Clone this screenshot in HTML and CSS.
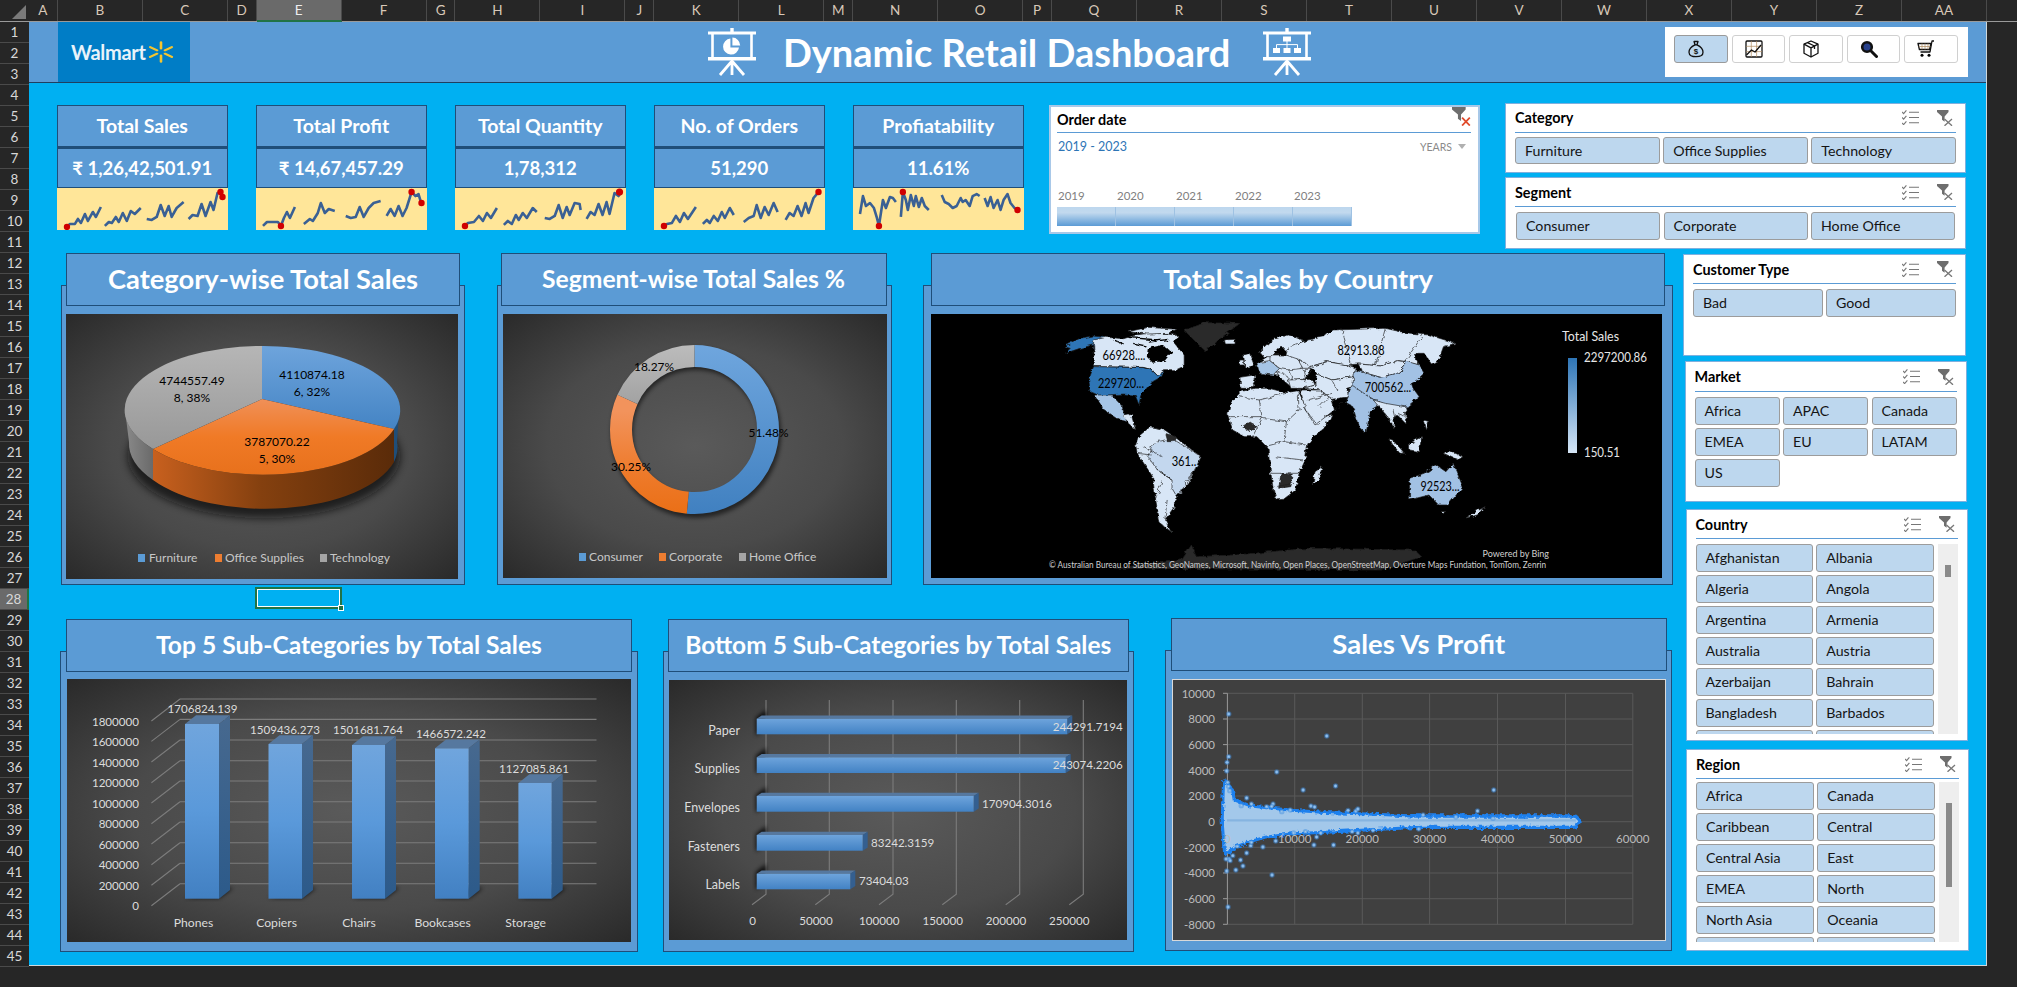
FILE: index.html
```html
<!DOCTYPE html>
<html lang="en">
<head>
<meta charset="utf-8">
<title>Dynamic Retail Dashboard</title>
<link rel="stylesheet" href="styles.css">
</head>
<body>
<svg class="defs" aria-hidden="true">
  <defs>
    <radialGradient id="bgDark" cx="50%" cy="50%" r="70%"><stop offset="0" stop-color="#5a5a5a"/><stop offset=".55" stop-color="#4a4a4a"/><stop offset="1" stop-color="#2a2a2a"/></radialGradient>
    <linearGradient id="pieBlue" x1="0" y1="0" x2="0" y2="1"><stop offset="0" stop-color="#6ea4dc"/><stop offset="1" stop-color="#4484c4"/></linearGradient>
    <linearGradient id="pieOrange" x1="0" y1="0" x2="0" y2="1"><stop offset="0" stop-color="#f09058"/><stop offset=".5" stop-color="#f07a26"/><stop offset="1" stop-color="#e8711c"/></linearGradient>
    <linearGradient id="pieGray" x1="0" y1="0" x2="0" y2="1"><stop offset="0" stop-color="#b6b6b6"/><stop offset="1" stop-color="#989898"/></linearGradient>
    <linearGradient id="wallOrange" x1="0" y1="0" x2="1" y2="0"><stop offset="0" stop-color="#c8601e"/><stop offset=".45" stop-color="#84400f"/><stop offset="1" stop-color="#5a2b09"/></linearGradient>
    <linearGradient id="wallGray" x1="0" y1="0" x2="1" y2="0"><stop offset="0" stop-color="#8a8a8a"/><stop offset="1" stop-color="#6a6a6a"/></linearGradient>
    <linearGradient id="barFront" x1="0" y1="0" x2="0" y2="1"><stop offset="0" stop-color="#70a5dd"/><stop offset=".5" stop-color="#5a99da"/><stop offset="1" stop-color="#4280c2"/></linearGradient>
    <linearGradient id="barSide" x1="0" y1="0" x2="0" y2="1"><stop offset="0" stop-color="#47698f"/><stop offset="1" stop-color="#2c5a8a"/></linearGradient>
    <linearGradient id="hbarFront" x1="0" y1="0" x2="0" y2="1"><stop offset="0" stop-color="#6ea4dc"/><stop offset="1" stop-color="#4282c4"/></linearGradient>
    <linearGradient id="legendBar" x1="0" y1="0" x2="0" y2="1"><stop offset="0" stop-color="#2e75b6"/><stop offset="1" stop-color="#d6e6f6"/></linearGradient>
    <linearGradient id="donutBlue" gradientUnits="userSpaceOnUse" x1="276" y1="0" x2="106" y2="0"><stop offset="0" stop-color="#6fa6de"/><stop offset="1" stop-color="#4080c0"/></linearGradient>
    <linearGradient id="donutOrange" gradientUnits="userSpaceOnUse" x1="210" y1="0" x2="106" y2="0"><stop offset="0" stop-color="#f2935c"/><stop offset=".6" stop-color="#ee7a2a"/><stop offset="1" stop-color="#ea6f16"/></linearGradient>
    <linearGradient id="donutGray" gradientUnits="userSpaceOnUse" x1="276" y1="0" x2="190" y2="0"><stop offset="0" stop-color="#bcbcbc"/><stop offset="1" stop-color="#969696"/></linearGradient>
    <filter id="soft" x="-20%" y="-20%" width="140%" height="140%"><feGaussianBlur stdDeviation="4"/></filter>
    <filter id="softS" x="-40%" y="-40%" width="180%" height="180%"><feGaussianBlur stdDeviation="2"/></filter>
    <filter id="rough" x="-5%" y="-20%" width="110%" height="140%"><feTurbulence type="fractalNoise" baseFrequency=".09" numOctaves="2" seed="4"/><feDisplacementMap in="SourceGraphic" scale="16"/></filter>
    <filter id="coast" x="-2%" y="-2%" width="104%" height="104%"><feTurbulence type="fractalNoise" baseFrequency=".07" numOctaves="3" seed="9"/><feDisplacementMap in="SourceGraphic" scale="12"/></filter>
    <symbol id="i-check" viewBox="0 0 17 15"><g class="ic-line"><path d="M0 2l1.6 1.6L4.4.4M0 7.5l1.6 1.6 2.8-3.2M0 13l1.6 1.6L4.4 11.4"/><path d="M7 2.2h10M7 7.5h10M7 12.8h10"/></g></symbol>
    <symbol id="i-clear" viewBox="0 0 16 16"><path class="ic-fill" d="M0 0h11.5v2L7.6 6.4v5.4L5 9.8V6.4L0 2z"/><path class="ic-x" d="M7.5 9l7.5 6.8M15 9l-7.5 6.8"/></symbol>
    <symbol id="i-clear-red" viewBox="0 0 16 16"><path class="ic-fill" d="M0 0h11.5v2L7.6 6.4v5.4L5 9.8V6.4L0 2z"/><path class="ic-xred" d="M8.5 9l6.5 6.6M15 9l-6.5 6.6"/></symbol>
    <symbol id="i-board" viewBox="0 0 48 48"><g class="bd-fill"><rect x="22.3" y="0" width="3.4" height="5"/><rect x="0" y="3.5" width="48" height="3"/><rect x="3.2" y="6" width="2.6" height="24"/><rect x="42.2" y="6" width="2.6" height="24"/><rect x="0" y="29" width="48" height="3.5"/></g><path class="bd-line" d="M24 32v15M24 33L12 47M24 33l12 14"/></symbol>
  </defs>
</svg>

<header class="colhead">
  <span class="corner"><svg class="corner-tri" viewBox="0 0 16 16"><path d="M16 0v16H0z"/></svg></span>
  <span class="c n">A</span><span class="c">B</span><span class="c">C</span><span class="c n">D</span><span class="c sel">E</span><span class="c">F</span><span class="c n">G</span><span class="c">H</span><span class="c">I</span><span class="c n">J</span><span class="c">K</span><span class="c">L</span><span class="c n">M</span><span class="c">N</span><span class="c">O</span><span class="c n">P</span><span class="c">Q</span><span class="c">R</span><span class="c">S</span><span class="c">T</span><span class="c">U</span><span class="c">V</span><span class="c">W</span><span class="c">X</span><span class="c">Y</span><span class="c">Z</span><span class="c">AA</span>
</header>

<div class="workspace">
  <nav class="rowhead">
    <span>1</span><span>2</span><span>3</span><span>4</span><span>5</span><span>6</span><span>7</span><span>8</span><span>9</span><span>10</span><span>11</span><span>12</span><span>13</span><span>14</span><span>15</span><span>16</span><span>17</span><span>18</span><span>19</span><span>20</span><span>21</span><span>22</span><span>23</span><span>24</span><span>25</span><span>26</span><span>27</span><span class="sel">28</span><span>29</span><span>30</span><span>31</span><span>32</span><span>33</span><span>34</span><span>35</span><span>36</span><span>37</span><span>38</span><span>39</span><span>40</span><span>41</span><span>42</span><span>43</span><span>44</span><span>45</span>
  </nav>

  <main class="sheet">
    <div class="banner">
      <div class="logo">
        <span class="logo-word">Walmart</span>
        <svg class="logo-spark" viewBox="0 0 28 28" preserveAspectRatio="none"><g class="spark"><path d="M14 1.5v8M14 18.5v8M3.2 7.8l6.9 4M17.9 16.2l6.9 4M3.2 20.2l6.9-4M17.9 11.8l6.9-4"/></g></svg>
      </div>
      <svg class="board-icon first" viewBox="0 0 48 48"><use href="#i-board"/><path class="bd-pie" d="M22.4 10.6a8 8 0 1 0 8.6 9H22.4z"/><path class="bd-pie" d="M24.4 9.6v7.8h7.8a8 8 0 0 0-7.8-7.8z"/></svg>
      <h1 class="title">Dynamic Retail Dashboard</h1>
      <svg class="board-icon second" viewBox="0 0 48 48"><use href="#i-board"/><g class="bd-fill"><rect x="20" y="8.500" width="8" height="5"/><rect x="10" y="20" width="7" height="5"/><rect x="20.500" y="20" width="7" height="5"/><rect x="31" y="20" width="7" height="5"/></g><path class="bd-thin" d="M24 13v7M13.500 20v-3.400h21V20"/></svg>
      <div class="toolbar">
        <button class="tool on"><svg viewBox="0 0 18 18"><g class="t-line"><path d="M7 1.500h4L10 4.800c3 1.400 6 4.400 6 7.400 0 3-3 4.500-7 4.500s-7-1.500-7-4.500c0-3 3-6 6-7.400z"/><path d="M7.500 4.800h3"/></g><text x="9" y="13.500" class="t-dollar">$</text></svg></button>
        <button class="tool"><svg viewBox="0 0 18 18"><g class="t-line"><rect x="1" y="1" width="16" height="16" rx="1"/><path class="t-grid" d="M1 6.300h16M1 11.600h16M6.300 1v16M11.600 1v16"/><path d="M1.500 15l5-5 3.500 2 6-7"/></g></svg></button>
        <button class="tool"><svg viewBox="0 0 18 18"><g class="t-line"><path d="M9 1l7 3.200v9L9 17l-7-3.800v-9z"/><path d="M2 4.200l7 3.600 7-3.600M9 7.800V17M5.500 2.600l7 3.400v3"/></g></svg></button>
        <button class="tool"><svg viewBox="0 0 18 18"><circle class="t-thick" cx="7" cy="7" r="4.800"/><path class="t-handle" d="M10.800 10.800l5.700 5.700"/></svg></button>
        <button class="tool"><svg viewBox="0 0 18 18"><g class="t-line"><path d="M17 1h-2l-2 11H3.500"/><path d="M1 3.500h13l-1.400 6H2.400z"/><path class="t-grid" d="M5 3.500v6M8 3.500v6M11 3.500v6M1.700 6.500h11.700"/></g><circle cx="5" cy="15.200" r="1.500"/><circle cx="12" cy="15.200" r="1.500"/></svg></button>
      </div>
    </div>

    <section class="top-row">
      <div class="kpis">
        <article class="kpi">
          <h3 class="kpi-cell">Total Sales</h3>
          <p class="kpi-cell">₹ 1,26,42,501.91</p>
          <svg class="spark-chart" viewBox="0 0 171 42">
            <polyline points="10,39 13,36 18,36 21,31 24,35 28,26 31,33 36,24 39,29 44,19"/><polyline points="48,38 52,34 55,35 59,29 62,34 66,25 70,33 74,23 78,26 84,20"/><polyline points="90,31 95,32 100,29 104,17 108,28 112,18 115,29 120,20 127,14"/><polyline points="132,31 136,27 141,28 145,16 149,28 154,14 157,22 161,5 164,4 166,10"/>
            <circle cx="10" cy="39" r="3.200"/><circle cx="164" cy="4" r="3.200"/><circle cx="166" cy="9" r="3.200"/>
          </svg>
        </article>
        <article class="kpi">
          <h3 class="kpi-cell">Total Profit</h3>
          <p class="kpi-cell">₹ 14,67,457.29</p>
          <svg class="spark-chart" viewBox="0 0 171 42">
            <polyline points="7,38 11,34 18,34 22,34 25,38 28,30 31,24 34,30 39,19"/><polyline points="48,36 54,31 57,33 62,25 65,15 69,25 73,21 79,23"/><polyline points="90,28 95,30 100,29 104,19 108,29 113,20 118,15 125,13"/><polyline points="131,28 135,21 139,28 143,18 147,28 151,20 156,4 160,8 163,6 166,16"/>
            <circle cx="25" cy="38" r="3.200"/><circle cx="156" cy="4" r="3.200"/><circle cx="166" cy="15" r="3.200"/>
          </svg>
        </article>
        <article class="kpi">
          <h3 class="kpi-cell">Total Quantity</h3>
          <p class="kpi-cell">1,78,312</p>
          <svg class="spark-chart" viewBox="0 0 171 42">
            <polyline points="10,38 13,35 19,34 24,28 28,33 32,25 36,30 42,20"/><polyline points="49,37 53,33 57,36 61,27 64,32 68,25 72,30 78,20 82,24"/><polyline points="90,30 95,31 100,28 104,17 108,30 112,19 115,27 120,15 125,16 126,22"/><polyline points="132,31 136,24 140,27 144,16 148,27 152,14 155,26 160,5 164,8 166,5"/>
            <circle cx="10" cy="38" r="3.200"/><circle cx="165" cy="4" r="3.600"/>
          </svg>
        </article>
        <article class="kpi">
          <h3 class="kpi-cell">No. of Orders</h3>
          <p class="kpi-cell">51,290</p>
          <svg class="spark-chart" viewBox="0 0 171 42">
            <polyline points="10,38 13,36 18,35 22,28 26,34 30,25 34,31 42,19"/><polyline points="49,36 53,32 56,35 60,28 64,33 68,24 71,30 76,20 80,27"/><polyline points="90,34 95,30 100,28 103,17 107,30 111,19 115,27 120,15 124,24"/><polyline points="132,32 136,25 140,28 144,18 148,28 152,15 155,25 160,10 165,4"/>
            <circle cx="10" cy="38" r="3.200"/><circle cx="165" cy="4" r="3.200"/>
          </svg>
        </article>
        <article class="kpi">
          <h3 class="kpi-cell">Profiatability</h3>
          <p class="kpi-cell">11.61%</p>
          <svg class="spark-chart" viewBox="0 0 171 42">
            <polyline points="7,26 10,8 13,18 17,15 21,20 24,30 26,38 30,12 33,20 37,9 40,10 43,14"/><polyline points="48,29 50,4 53,12 55,22 58,7 61,18 63,8 66,19 69,10 72,18 76,22"/><polyline points="89,7 92,14 96,16 100,20 104,18 108,10 110,14 113,12 117,18 120,8 124,6 127,8"/><polyline points="132,10 135,18 138,9 141,20 145,12 148,22 151,12 155,6 158,15 162,20 165,22"/>
            <circle cx="26" cy="38" r="3.200"/><circle cx="50" cy="4" r="3.200"/><circle cx="165" cy="22" r="3.200"/>
          </svg>
        </article>
      </div>

      <section class="timeline">
        <div class="tl-head"><h4 class="sl-title">Order date</h4><svg class="ic-red"><use href="#i-clear-red"/></svg></div>
        <div class="tl-range"><span class="tl-dates">2019 - 2023</span><span class="tl-level">YEARS<i class="tl-caret"></i></span></div>
        <div class="tl-years"><span>2019</span><span>2020</span><span>2021</span><span>2022</span><span>2023</span></div>
        <div class="tl-bars"><i></i><i></i><i></i><i></i><i></i></div>
      </section>

      <div class="stack">
        <section class="slicer s-cat">
          <div class="sl-head"><h4 class="sl-title">Category</h4><svg class="ic-check"><use href="#i-check"/></svg><svg class="ic-clear"><use href="#i-clear"/></svg></div>
          <div class="sl-grid g3"><span class="btn">Furniture</span><span class="btn">Office Supplies</span><span class="btn">Technology</span></div>
        </section>
        <section class="slicer s-seg">
          <div class="sl-head"><h4 class="sl-title">Segment</h4><svg class="ic-check"><use href="#i-check"/></svg><svg class="ic-clear"><use href="#i-clear"/></svg></div>
          <div class="sl-grid g3"><span class="btn">Consumer</span><span class="btn">Corporate</span><span class="btn">Home Office</span></div>
        </section>
      </div>
    </section>

    <section class="lower">
      <div class="charts">
        <div class="chart-row r1">
          <article class="card c-cat">
            <h2 class="card-title">Category-wise Total Sales</h2>
            <div class="panel">
              <svg class="plot" viewBox="0 0 392 265">
                <rect width="392" height="265" fill="url(#bgDark)"/>
                <ellipse cx="198" cy="142" rx="136" ry="62" fill="#111" opacity=".75" filter="url(#soft)"/>
                <path d="M59 96A137 64 0 0 0 87 135V166A134 64 0 0 1 63 128Z" fill="url(#wallGray)"/>
                <path d="M87 135A137 64 0 0 0 328 115V148A134 64 0 0 1 87 166Z" fill="url(#wallOrange)"/>
                <path d="M333 96A137 64 0 0 1 328 115V148A134 64 0 0 0 331 128Z" fill="#1f4e79"/>
                <path d="M196 85L196 32A137 64 0 0 1 328 115Z" fill="url(#pieBlue)"/>
                <path d="M196 85L328 115A137 64 0 0 1 87 135Z" fill="url(#pieOrange)"/>
                <path d="M196 85L87 135A137 64 0 0 1 196 32Z" fill="url(#pieGray)"/>
                <g class="dl-black">
                  <text x="246" y="65">4110874.18</text><text x="246" y="82">6, 32%</text>
                  <text x="211" y="132">3787070.22</text><text x="211" y="149">5, 30%</text>
                  <text x="126" y="71">4744557.49</text><text x="126" y="88">8, 38%</text>
                </g>
                <g class="legend">
                  <rect x="72" y="240" width="7" height="8" fill="#5b9bd5"/><text x="83" y="248">Furniture</text>
                  <rect x="149" y="240" width="7" height="8" fill="#ed7d31"/><text x="159" y="248">Office Supplies</text>
                  <rect x="254" y="240" width="7" height="8" fill="#a5a5a5"/><text x="264" y="248">Technology</text>
                </g>
              </svg>
            </div>
          </article>
          <article class="card c-seg">
            <h2 class="card-title">Segment-wise Total Sales %</h2>
            <div class="panel">
              <svg class="plot" viewBox="0 0 384 264">
                <rect width="384" height="264" fill="url(#bgDark)"/>
                <circle cx="193" cy="119" r="74" class="donut-shadow" filter="url(#softS)"/>
                <g transform="rotate(-90 191.500 115.500)" class="donut">
                  <circle cx="191.500" cy="115.500" r="73.500" pathLength="100" stroke="url(#donutBlue)" stroke-dasharray="51.48 100"/>
                  <circle cx="191.500" cy="115.500" r="73.500" pathLength="100" stroke="url(#donutOrange)" stroke-dasharray="30.25 100" stroke-dashoffset="-51.48"/>
                  <circle cx="191.500" cy="115.500" r="73.500" pathLength="100" stroke="url(#donutGray)" stroke-dasharray="18.27 100" stroke-dashoffset="-81.73"/>
                </g>
                <g class="dl-black">
                  <text x="265.500" y="123" textLength="40" lengthAdjust="spacingAndGlyphs">51.48%</text><text x="128" y="157" textLength="40" lengthAdjust="spacingAndGlyphs">30.25%</text><text x="151" y="57" textLength="40" lengthAdjust="spacingAndGlyphs">18.27%</text>
                </g>
                <g class="legend">
                  <rect x="76" y="239" width="7" height="8" fill="#5b9bd5"/><text x="86" y="247">Consumer</text>
                  <rect x="156" y="239" width="7" height="8" fill="#ed7d31"/><text x="166" y="247">Corporate</text>
                  <rect x="236" y="239" width="7" height="8" fill="#a5a5a5"/><text x="246" y="247">Home Office</text>
                </g>
              </svg>
            </div>
          </article>
          <article class="card c-map">
            <h2 class="card-title">Total Sales by Country</h2>
            <div class="panel">
              <svg class="plot" viewBox="0 0 731 264">
                <rect width="731" height="264" fill="#000"/>
                <g transform="translate(-11 -74) scale(.4847 .3333)" class="map" filter="url(#coast)">
                  <polygon class="mx" points="545,270 590,248 660,250 620,295 590,335 565,300"/>
                  <polygon class="mx" points="400,985 540,960 560,915 570,950 650,945 800,925 1020,930 1035,950 950,990"/>
                  <polygon class="mu" points="297,320 330,295 355,288 385,292 358,330 358,315 330,325 300,340 310,325"/>
                  <polygon class="ml" points="358,300 385,292 420,296 445,285 480,278 530,285 525,310 545,345 545,378 525,392 505,392 490,407 478,388 460,382 360,380"/>
                  <polygon class="ml" points="430,275 470,262 530,268 512,280 470,282"/>
                  <polygon class="mk" points="470,325 500,315 520,335 505,362 480,368 468,350"/>
                  <path class="mk-line" d="M430 292l60 8M472 306l40-8M440 310l25 8M400 300l20 12"/>
                  <polygon class="mu" points="358,380 460,383 478,390 490,407 505,393 498,410 480,425 470,440 455,468 452,495 444,466 420,462 395,464 375,470 352,455 348,420"/>
                  <polygon class="mm" points="360,465 395,465 415,495 420,525 435,545 405,535 380,510"/>
                  <polygon class="ml" points="420,525 435,520 445,570 430,550"/>
                  <polygon class="ml" points="450,590 475,560 505,570 525,590 580,650 570,680 555,730 525,780 525,800 505,840 518,875 495,850 485,770 480,710 448,640 445,615"/>
                  <polygon class="mb" points="480,610 505,600 525,600 580,650 570,680 555,720 530,770 520,745 520,720 490,690 470,650"/>
                  <polygon class="mx" points="505,580 530,590 525,605 510,605"/>
                  <polygon class="ml" points="635,525 640,490 662,455 690,445 720,445 755,458 780,452 800,510 815,542 850,522 838,560 812,590 800,612 795,660 782,700 775,750 750,778 735,780 728,740 722,680 718,625 695,590 670,590 645,570"/>
                  <polygon class="ml" points="830,680 822,720 810,735 815,695"/>
                  <polygon class="mx" points="745,700 770,705 765,740 740,745"/>
                  <polygon class="mx" points="665,560 680,545 695,560 680,575"/>
                  <polygon class="ml" points="700,365 722,345 770,345 820,365 810,385 795,415 770,425 740,405 700,400"/>
                  <polygon class="ml" points="660,412 690,405 692,420 682,445 662,445"/>
                  <polygon class="mm" points="695,368 722,362 742,385 728,405 700,400"/>
                  <polygon class="ml" points="722,345 770,345 790,375 780,395 742,385 722,362"/>
                  <polygon class="ml" points="735,395 750,400 775,435 765,440 745,415"/>
                  <polygon class="ml" points="760,390 790,385 795,415 770,425 765,405"/>
                  <polygon class="ml" points="668,345 680,340 690,378 670,382"/>
                  <polygon class="ml" points="660,360 668,360 668,375 658,375"/>
                  <polygon class="ml" points="700,335 725,300 760,285 790,300 770,320 758,340 745,318 725,350 708,350"/>
                  <polygon class="ml" points="780,360 820,365 810,385 790,385"/>
                  <polygon class="ml" points="628,300 650,298 650,312 630,312"/>
                  <polygon class="ml" points="755,345 760,320 800,300 835,290 850,270 900,268 960,265 1000,278 1050,285 1105,310 1080,320 1070,360 1055,372 1040,340 1018,340 1030,375 1000,365 985,362 950,378 905,372 880,375 840,365 805,380 785,360"/>
                  <polygon class="ml" points="805,380 840,365 880,375 900,385 895,410 850,420 815,400"/>
                  <polygon class="ml" points="905,372 950,378 985,362 1000,365 1000,380 985,400 950,412 915,398"/>
                  <polygon class="mc" points="895,390 910,395 950,412 985,400 1000,380 1000,362 1030,375 1040,400 1025,420 1015,430 1020,450 1030,470 1005,500 975,505 955,490 935,478 890,440"/>
                  <polygon class="ml" points="815,400 850,420 895,410 893,440 880,445 885,470 850,478 825,450 790,445 815,435"/>
                  <polygon class="mc" points="885,445 895,440 935,478 945,480 950,492 930,510 920,580 905,560 893,500 880,490"/>
                  <polygon class="ml" points="785,450 825,450 850,478 855,510 815,555 795,510"/>
                  <polygon class="ml" points="760,420 810,418 815,435 790,445 765,445"/>
                  <ellipse class="mk" cx="812" cy="405" rx="7" ry="16"/>
                  <polygon class="ml" points="935,480 960,490 1000,500 1005,555 985,525 975,535 980,570 965,530"/>
                  <polygon class="ml" points="965,595 975,600 1000,640 990,640"/>
                  <polygon class="ml" points="1010,610 1035,590 1030,635 1010,630"/>
                  <polygon class="ml" points="1090,630 1120,650 1110,660 1080,640"/>
                  <polygon class="ml" points="1040,540 1050,545 1045,570"/>
                  <polygon class="mc" points="1010,715 1040,700 1065,675 1085,695 1100,670 1120,740 1090,795 1070,795 1050,765 1010,780"/>
                  <polygon class="ml" points="1125,835 1165,800 1168,795 1150,825"/>
                  <polygon class="ml" points="1075,815 1085,815 1078,822"/>
                  <path class="mline" d="M660 470l40 10 55-20M700 480l6 55 50 10 30-40M640 530h66M706 535l-20 55M756 545l-5 60-40 15M751 605l45 10M730 650l60 10M725 700h55M735 740l35-10M780 450l2 60M810 380l-15 50M850 420l10 30M885 470l-30 40M820 555l-30-55M870 265l20 110M960 265l-20 110M1040 280l-40 85M460 620l40 30M490 690l30 30M500 720l-15 60M448 640l30 5M505 840l5-60M845 470l-20 30M800 480l50 -20M975 505l5 30M985 520l18 10"/>
                </g>
                <g class="dl-map">
                  <text x="193" y="46" textLength="43" lengthAdjust="spacingAndGlyphs">66928....</text><text x="430" y="41" textLength="47" lengthAdjust="spacingAndGlyphs">82913.88</text><text x="190" y="74" textLength="46" lengthAdjust="spacingAndGlyphs">229720...</text><text x="457" y="78" textLength="46.500" lengthAdjust="spacingAndGlyphs">700562...</text><text x="253" y="152" textLength="24.700" lengthAdjust="spacingAndGlyphs">361..</text><text x="509" y="177" textLength="39" lengthAdjust="spacingAndGlyphs">92523...</text>
                </g>
                <g class="map-legend">
                  <text x="631" y="27" textLength="57" lengthAdjust="spacingAndGlyphs">Total Sales</text>
                  <rect x="637" y="44" width="9" height="95" fill="url(#legendBar)"/>
                  <text x="653" y="48" textLength="63" lengthAdjust="spacingAndGlyphs">2297200.86</text><text x="653" y="143" textLength="36" lengthAdjust="spacingAndGlyphs">150.51</text>
                </g>
                <text class="attr attr-r" x="618" y="243">Powered by Bing</text>
                <text class="attr" x="118" y="254" textLength="497" lengthAdjust="spacingAndGlyphs">© Australian Bureau of Statistics, GeoNames, Microsoft, Navinfo, Open Places, OpenStreetMap, Overture Maps Fundation, TomTom, Zenrin</text>
              </svg>
            </div>
          </article>
        </div>
        <div class="chart-row r2">
          <article class="card c-top">
            <h2 class="card-title">Top 5 Sub-Categories by Total Sales</h2>
            <div class="panel">
              <svg class="plot" viewBox="0 0 564 263">
                <rect width="564" height="263" fill="url(#bgDark)"/>
                <path class="grid3d" d="M113 20H529.500M113 40.400H529.500M113 61H529.500M113 81.700H529.500M113 102H529.500M113 122.700H529.500M113 143H529.500M113 163.700H529.500M113 184.300H529.500M113 204.700H529.500M113 20L84.400 42M113 40.400L84.400 62.400M113 61L84.400 83M113 81.700L84.400 103.700M113 102L84.400 124M113 122.700L84.400 144.700M113 143L84.400 165M113 163.700L84.400 185.700M113 184.300L84.400 206.300M113 204.700L84.400 226.700"/>
                <g class="axis-r nums">
                  <text x="72" y="47">1800000</text><text x="72" y="67">1600000</text><text x="72" y="88">1400000</text><text x="72" y="108">1200000</text><text x="72" y="129">1000000</text><text x="72" y="149">800000</text><text x="72" y="170">600000</text><text x="72" y="190">400000</text><text x="72" y="211">200000</text><text x="72" y="231">0</text>
                </g>
                <g fill="#000" filter="url(#softS)" opacity=".8">
                  <polygon points="118,219 152,219 166,209 152,209"/><polygon points="201,219 235,219 249,209 235,209"/><polygon points="285,219 318,219 332,209 318,209"/><polygon points="368,219 402,219 416,209 402,209"/><polygon points="451,219 485,219 499,209 485,209"/>
                </g>
                <g>
                  <polygon class="b-top" points="118,45 152,45 163,36.300 129,36.300"/><polygon points="152,45 163,36.300 163,211 152,219.700" fill="url(#barSide)"/><rect x="118" y="45" width="34" height="174.700" fill="url(#barFront)"/>
                  <polygon class="b-top" points="201.500,65 235,65 246,56.300 212.500,56.300"/><polygon points="235,65 246,56.300 246,211 235,219.700" fill="url(#barSide)"/><rect x="201.500" y="65" width="33.500" height="154.700" fill="url(#barFront)"/>
                  <polygon class="b-top" points="285,66 318,66 329,57.300 296,57.300"/><polygon points="318,66 329,57.300 329,211 318,219.700" fill="url(#barSide)"/><rect x="285" y="66" width="33" height="153.700" fill="url(#barFront)"/>
                  <polygon class="b-top" points="368,69.300 401.700,69.300 412.700,60.600 379,60.600"/><polygon points="401.700,69.300 412.700,60.600 412.700,211 401.700,219.700" fill="url(#barSide)"/><rect x="368" y="69.300" width="33.700" height="150.400" fill="url(#barFront)"/>
                  <polygon class="b-top" points="451.400,104 484.700,104 495.700,95.300 462.400,95.300"/><polygon points="484.700,104 495.700,95.300 495.700,211 484.700,219.700" fill="url(#barSide)"/><rect x="451.400" y="104" width="33.300" height="115.700" fill="url(#barFront)"/>
                </g>
                <g class="axis-c nums">
                  <text x="135.500" y="34">1706824.139</text><text x="218" y="55">1509436.273</text><text x="301" y="55">1501681.764</text><text x="384" y="59">1466572.242</text><text x="467" y="94">1127085.861</text>
                </g>
                <g class="axis-c cats">
                  <text x="126.500" y="248">Phones</text><text x="209.600" y="248">Copiers</text><text x="292" y="248">Chairs</text><text x="375.600" y="248">Bookcases</text><text x="458.700" y="248">Storage</text>
                </g>
              </svg>
            </div>
          </article>
          <article class="card c-bot">
            <h2 class="card-title">Bottom 5 Sub-Categories by Total Sales</h2>
            <div class="panel">
              <svg class="plot" viewBox="0 0 458 260">
                <rect width="458" height="260" fill="url(#bgDark)"/>
                <path class="grid3d" d="M97 20V214.300L83 224.700M160.300 20V214.300L146.300 224.700M224 20V214.300L210 224.700M287.300 20V214.300L273.300 224.700M350.700 20V214.300L336.700 224.700M414.300 20V214.300L400.300 224.700"/>
                <g fill="#000" filter="url(#softS)" opacity=".85">
                  <polygon points="87,38 97,30 97,46 87,56"/><polygon points="87,76 97,68 97,84 87,94"/><polygon points="87,115 97,107 97,123 87,133"/><polygon points="87,154 97,146 97,162 87,172"/><polygon points="87,192 97,184 97,200 87,210"/>
                </g>
                <g>
                  <polygon class="b-top" points="87.700,38.700 398.300,38.700 403.300,35.400 92.700,35.400"/><polygon class="b-side" points="398.300,38.700 403.300,35.400 403.300,51 398.300,54.300"/><rect x="87.700" y="38.700" width="310.600" height="15.600" fill="url(#hbarFront)"/>
                  <polygon class="b-top" points="87.700,77.300 396.700,77.300 401.700,74 92.700,74"/><polygon class="b-side" points="396.700,77.300 401.700,74 401.700,89.700 396.700,93"/><rect x="87.700" y="77.300" width="309" height="15.700" fill="url(#hbarFront)"/>
                  <polygon class="b-top" points="87.700,116 304.700,116 309.700,112.700 92.700,112.700"/><polygon class="b-side" points="304.700,116 309.700,112.700 309.700,128.400 304.700,131.700"/><rect x="87.700" y="116" width="217" height="15.700" fill="url(#hbarFront)"/>
                  <polygon class="b-top" points="87.700,155 193.700,155 198.700,151.700 92.700,151.700"/><polygon class="b-side" points="193.700,155 198.700,151.700 198.700,167.400 193.700,170.700"/><rect x="87.700" y="155" width="106" height="15.700" fill="url(#hbarFront)"/>
                  <polygon class="b-top" points="87.700,193.700 181.300,193.700 186.300,190.400 92.700,190.400"/><polygon class="b-side" points="181.300,193.700 186.300,190.400 186.300,206 181.300,209.300"/><rect x="87.700" y="193.700" width="93.600" height="15.600" fill="url(#hbarFront)"/>
                </g>
                <g class="axis-l nums">
                  <text x="383.700" y="51">244291.7194</text><text x="383.700" y="89">243074.2206</text><text x="313" y="128">170904.3016</text><text x="202" y="167">83242.3159</text><text x="190" y="205">73404.03</text>
                </g>
                <g class="axis-r">
                  <text x="71" y="55">Paper</text><text x="71" y="93">Supplies</text><text x="71" y="132">Envelopes</text><text x="71" y="171">Fasteners</text><text x="71" y="209">Labels</text>
                </g>
                <g class="axis-c nums">
                  <text x="83.700" y="245">0</text><text x="147" y="245">50000</text><text x="210.300" y="245">100000</text><text x="273.700" y="245">150000</text><text x="337" y="245">200000</text><text x="400.300" y="245">250000</text>
                </g>
              </svg>
            </div>
          </article>
          <article class="card c-sca">
            <h2 class="card-title">Sales Vs Profit</h2>
            <div class="panel">
              <svg class="plot" viewBox="0 0 494 262">
                <rect x=".5" y=".5" width="493" height="261" class="sc-bg"/>
                <path class="sc-grid" d="M55.400 14.300H460.800M55.400 40H460.800M55.400 65.600H460.800M55.400 91.300H460.800M55.400 117H460.800M55.400 142.700H460.800M55.400 168.300H460.800M55.400 194H460.800M55.400 219.700H460.800M55.400 245.300H460.800M122.700 14.300V245.300M190.300 14.300V245.300M257.600 14.300V245.300M325.500 14.300V245.300M393.500 14.300V245.300M460.800 14.300V245.300"/>
                <path class="sc-axis" d="M55.400 14.300V245.300M51 14.300h4.400M51 40h4.400M51 65.600h4.400M51 91.300h4.400M51 117h4.400M51 142.700h4.400M51 168.300h4.400M51 194h4.400M51 219.700h4.400M51 245.300h4.400"/>
                <g class="sc-axt">
                  <text class="sc-r" x="43" y="18.500">10000</text><text class="sc-r" x="43" y="44">8000</text><text class="sc-r" x="43" y="69.500">6000</text><text class="sc-r" x="43" y="95.500">4000</text><text class="sc-r" x="43" y="121">2000</text><text class="sc-r" x="43" y="147">0</text><text class="sc-r" x="43" y="172.500">-2000</text><text class="sc-r" x="43" y="198">-4000</text><text class="sc-r" x="43" y="223.500">-6000</text><text class="sc-r" x="43" y="249.500">-8000</text>
                </g>
                <g transform="translate(-22 -70) scale(.338 .3333)">
                  <g filter="url(#rough)">
                    <path class="sc-tail-halo" d="M300 638H1252"/>
                    <polygon class="sc-halo" points="222,520 240,545 245,575 290,595 340,600 420,608 520,615 700,622 800,628 800,650 650,658 520,665 420,670 340,680 290,695 250,710 225,730 218,640"/>
                    <path class="sc-tail-core" d="M300 638H1252"/>
                    <polygon class="sc-core" points="222,520 240,545 245,575 290,595 340,600 420,608 520,615 700,622 800,628 800,650 650,658 520,665 420,670 340,680 290,695 250,710 225,730 218,640"/>
                  </g>
                  <path class="sc-mid" d="M228 634H1260"/>
                  <g class="sc-pts">
                    <circle cx="233" cy="315" r="5"/><circle cx="523" cy="381" r="5"/><circle cx="233" cy="443" r="5"/><circle cx="228" cy="460" r="5"/><circle cx="227" cy="486" r="5"/><circle cx="375" cy="489" r="5"/><circle cx="453" cy="543" r="5"/><circle cx="549" cy="531" r="5"/><circle cx="286" cy="567" r="5"/><circle cx="1017" cy="543" r="5"/><circle cx="969" cy="606" r="5"/><circle cx="476" cy="591" r="5"/><circle cx="487" cy="594" r="5"/><circle cx="586" cy="604" r="5"/><circle cx="609" cy="606" r="5"/><circle cx="615" cy="600" r="5"/><circle cx="364" cy="585" r="5"/><circle cx="345" cy="593" r="5"/><circle cx="360" cy="592" r="5"/><circle cx="485" cy="708" r="5"/><circle cx="493" cy="684" r="5"/><circle cx="543" cy="708" r="5"/><circle cx="286" cy="732" r="5"/><circle cx="334" cy="714" r="5"/><circle cx="372" cy="696" r="5"/><circle cx="268" cy="753" r="5"/><circle cx="275" cy="771" r="5"/><circle cx="254" cy="783" r="5"/><circle cx="227" cy="786" r="5"/><circle cx="361" cy="798" r="5"/><circle cx="231" cy="894" r="5"/><circle cx="234" cy="750" r="5"/><circle cx="237" cy="755" r="5"/><circle cx="245" cy="740" r="5"/><circle cx="225" cy="750" r="5"/><circle cx="298" cy="710" r="5"/><circle cx="258" cy="712" r="5"/><circle cx="300" cy="700" r="5"/><circle cx="1240" cy="690" r="5"/><circle cx="808" cy="618" r="5"/><circle cx="905" cy="624" r="5"/><circle cx="1015" cy="628" r="5"/><circle cx="660" cy="664" r="5"/><circle cx="795" cy="660" r="5"/><circle cx="615" cy="672" r="5"/><circle cx="598" cy="668" r="5"/><circle cx="505" cy="672" r="5"/><circle cx="460" cy="668" r="5"/><circle cx="425" cy="672" r="5"/><circle cx="415" cy="603" r="5"/><circle cx="390" cy="608" r="5"/><circle cx="300" cy="585" r="5"/><circle cx="270" cy="590" r="5"/><circle cx="230" cy="520" r="5"/><circle cx="232" cy="532" r="5"/><circle cx="236" cy="545" r="5"/>
                  </g>
                </g>
                <g class="sc-axt sc-c">
                  <text x="55.400" y="164">0</text><text x="122.700" y="164">10000</text><text x="190.300" y="164">20000</text><text x="257.600" y="164">30000</text><text x="325.500" y="164">40000</text><text x="393.500" y="164">50000</text><text x="460.800" y="164">60000</text>
                </g>
              </svg>
            </div>
          </article>
        </div>
      </div>

      <aside class="side">
        <section class="slicer s-cus">
          <div class="sl-head"><h4 class="sl-title">Customer Type</h4><svg class="ic-check"><use href="#i-check"/></svg><svg class="ic-clear"><use href="#i-clear"/></svg></div>
          <div class="sl-grid g2"><span class="btn">Bad</span><span class="btn">Good</span></div>
        </section>
        <section class="slicer s-mkt">
          <div class="sl-head"><h4 class="sl-title">Market</h4><svg class="ic-check"><use href="#i-check"/></svg><svg class="ic-clear"><use href="#i-clear"/></svg></div>
          <div class="sl-grid g3"><span class="btn">Africa</span><span class="btn">APAC</span><span class="btn">Canada</span><span class="btn">EMEA</span><span class="btn">EU</span><span class="btn">LATAM</span><span class="btn">US</span></div>
        </section>
        <section class="slicer s-cty">
          <div class="sl-head"><h4 class="sl-title">Country</h4><svg class="ic-check"><use href="#i-check"/></svg><svg class="ic-clear"><use href="#i-clear"/></svg></div>
          <div class="sl-scroll">
            <div class="sl-grid g2"><span class="btn">Afghanistan</span><span class="btn">Albania</span><span class="btn">Algeria</span><span class="btn">Angola</span><span class="btn">Argentina</span><span class="btn">Armenia</span><span class="btn">Australia</span><span class="btn">Austria</span><span class="btn">Azerbaijan</span><span class="btn">Bahrain</span><span class="btn">Bangladesh</span><span class="btn">Barbados</span><span class="btn"></span><span class="btn"></span></div>
            <div class="track"><i class="thumb"></i></div>
          </div>
        </section>
        <section class="slicer s-reg">
          <div class="sl-head"><h4 class="sl-title">Region</h4><svg class="ic-check"><use href="#i-check"/></svg><svg class="ic-clear"><use href="#i-clear"/></svg></div>
          <div class="sl-scroll">
            <div class="sl-grid g2"><span class="btn">Africa</span><span class="btn">Canada</span><span class="btn">Caribbean</span><span class="btn">Central</span><span class="btn">Central Asia</span><span class="btn">East</span><span class="btn">EMEA</span><span class="btn">North</span><span class="btn">North Asia</span><span class="btn">Oceania</span><span class="btn"></span><span class="btn"></span></div>
            <div class="track"><i class="thumb"></i></div>
          </div>
        </section>
      </aside>
    </section>
    <div class="cell-cursor"><i class="cell-handle"></i></div>
  </main>
</div>
</body>
</html>
```

FILE: styles.css
```css
* { box-sizing: border-box; }
html, body { margin: 0; padding: 0; }
body {
  width: 2017px; height: 987px; overflow: hidden;
  background: #262626; font-family: Lato, "Noto Sans", sans-serif; color: #111;
}
h1, h2, h3, h4, p { margin: 0; }
.defs { position: absolute; width: 0; height: 0; }

/* Excel chrome */
.colhead { display: flex; height: 22px; border-bottom: 1px solid #9a9a9a; background: #262626; }
.corner { width: 29px; flex: none; padding: 5px 2px 0 12px; }
.corner-tri { display: block; width: 14px; height: 14px; fill: #7a7a7a; }
.c {
  width: 85px; flex: none; text-align: center; font-size: 13.5px; line-height: 21px; color: #d8c8b8;
  border-right: 1px solid #4a4a4a;
}
.c.n { width: 28.83px; }
.c.sel { background: #6a6a6a; color: #eee; border-bottom: 2px solid #217346; height: 22px; }
.workspace { display: flex; }
.rowhead { width: 29px; flex: none; display: flex; flex-direction: column; }
.rowhead span {
  height: 21px; flex: none; text-align: center; font-size: 13.5px; line-height: 21px; color: #d8d8d8;
  border-bottom: 1px solid #4a4a4a;
}
.rowhead .sel { background: #6a6a6a; border-right: 2px solid #217346; }
.sheet {
  position: relative; width: 1958px; height: 944px; flex: none; background: #00b0f2;
  border-bottom: 1px solid #cfd8dc; border-right: 1px solid #cfd8dc;
}
.cell-cursor {
  position: absolute; left: 226px; top: 565px; width: 87px; height: 22px;
  border: 2px solid #217346; outline: 1px solid #fff; outline-offset: -3px;
}
.cell-handle { position: absolute; right: -4px; bottom: -4px; width: 6px; height: 6px; background: #217346; border: 1px solid #fff; }

/* Banner */
.banner {
  display: flex; align-items: center; height: 61px; padding-left: 29px;
  background: #5b9bd5; border-bottom: 1px solid #1f3f60;
}
.logo {
  width: 132px; height: 60px; flex: none; background: #007dc6; display: flex; align-items: center; padding-left: 13px;
}
.logo-word { font-weight: 700; font-size: 20px; color: #e8f3fa; letter-spacing: -.3px; }
.logo-spark { width: 28px; height: 22px; margin-left: 1px; }
.spark { stroke: #f5c52e; stroke-width: 2.6; stroke-linecap: round; fill: none; }
.board-icon { width: 48px; height: 48px; flex: none; }
.board-icon.first { margin-left: 518px; }
.board-icon.second { margin-left: 33px; }
.bd-fill { fill: #fff; }
.bd-line { stroke: #fff; stroke-width: 2.8; fill: none; }
.bd-thin { stroke: #fff; stroke-width: 1; fill: none; }
.bd-pie { fill: #fff; }
.title { margin-left: 27px; width: 447px; flex: none; font-size: 38px; font-weight: 700; color: #fff; white-space: nowrap; line-height: 44px; }
.toolbar {
  display: flex; gap: 4px; margin-left: auto; margin-right: 18px; width: 303px; height: 50px; align-items: flex-start;
  padding: 8px 9px; background: #fff;
}
.tool {
  width: 53.5px; height: 28px; flex: none; padding: 0 0 0 12px; background: #fff;
  border: 1px solid #d0d0d0; border-radius: 3px; display: flex; align-items: center;
}
.tool.on { background: #bdd7ee; border-color: #9a9a9a; }
.tool svg { width: 18px; height: 18px; display: block; }
.t-line { fill: none; stroke: #111; stroke-width: 1.3; stroke-linejoin: round; }
.t-grid { stroke: #b08d60; stroke-width: .7; }
.t-dollar { font-size: 8px; font-weight: 700; text-anchor: middle; fill: #111; }
.t-thick { fill: #27408b; stroke: #111; stroke-width: 2.6; }
.t-handle { stroke: #111; stroke-width: 3; stroke-linecap: round; }

/* KPI + top slicers */
.top-row { display: flex; align-items: flex-start; height: 170px; padding: 19.5px 0 0 28px; }
.kpis { display: flex; gap: 28.5px; margin-top: 2px; }
.kpi { width: 170.5px; flex: none; display: flex; flex-direction: column; }
.kpi-cell {
  height: 42px; display: flex; align-items: center; justify-content: center; background: #5b9bd5;
  border: 1px solid #1f4e79; color: #fff; font-size: 19.5px; font-weight: 700;
}
.kpi-cell + .kpi-cell { border-top-width: 2px; height: 41.5px; font-size: 18.5px; }
.spark-chart { display: block; width: 170.5px; height: 42px; background: #ffe699; }
.spark-chart polyline { fill: none; stroke: #3a6094; stroke-width: 2.6; stroke-linejoin: round; }
.spark-chart circle { fill: #d00000; }

.timeline {
  width: 431px; height: 129px; flex: none; margin: 2px 0 0 25.5px; padding: 0 7px 0 6px; background: #fff;
  border: 2px solid #a8c8e8; display: flex; flex-direction: column;
}
.tl-head { display: flex; align-items: center; justify-content: space-between; height: 26px; border-bottom: 1px solid #5b9bd5; }
.ic-red { width: 19px; height: 19px; margin-top: -6px; }
.tl-range { display: flex; justify-content: space-between; align-items: center; height: 25px; padding: 3px 0 0 1px; }
.tl-dates { font-size: 12.5px; color: #2e75b6; }
.tl-level { font-size: 10.5px; color: #8a8a8a; padding-right: 5px; display: flex; align-items: center; gap: 6px; }
.tl-caret { width: 0; height: 0; border: 4px solid transparent; border-top: 5px solid #b0b0b0; border-bottom: 0; }
.tl-years { display: flex; margin-top: 30px; padding-left: 1px; }
.tl-years span { width: 59px; font-size: 11.5px; color: #808080; line-height: 15px; }
.tl-bars { display: flex; margin-top: 4px; }
.tl-bars i { width: 59px; height: 19px; background: linear-gradient(#bdd7ee, #c2d9ee 30%, #5b9bd5); border-right: 1px solid #9fc2e3; }

.stack { display: flex; flex-direction: column; gap: 4px; margin-left: 25px; width: 461px; flex: none; }

/* Slicers */
.slicer { background: #fff; border: 1.5px solid #7fb0de; padding: 0 9px; flex: none; overflow: hidden; }
.sl-head { display: flex; align-items: center; height: 29px; border-bottom: 1px solid #5b9bd5; margin-bottom: 5px; }
.sl-title { font-size: 14.4px; font-weight: 700; color: #000; margin-right: auto; white-space: nowrap; }
.ic-check { width: 17px; height: 15px; margin-right: 18px; }
.ic-clear { width: 16px; height: 16px; margin-right: 3px; }
.ic-line { fill: none; stroke: #777; stroke-width: 1.1; }
.ic-fill { fill: #6e6e6e; }
.ic-x { stroke: #777; stroke-width: 1.3; }
.ic-xred { stroke: #e04a2a; stroke-width: 1.5; }
.sl-grid { display: grid; gap: 3.5px; }
.g3 { grid-template-columns: repeat(3, 1fr); }
.g2 { grid-template-columns: repeat(2, 1fr); }
.btn {
  height: 27.5px; background: #bdd7ee; border: 1px solid #9c9c9c; border-radius: 3px;
  font-size: 14.2px; line-height: 25.5px; padding-left: 9px; color: #141414; white-space: nowrap; overflow: hidden;
}
.s-cat { height: 70.500px; }
.s-cat .sl-head { margin-bottom: 4px; }
.s-seg { height: 71.500px; }
.s-seg .sl-grid { margin: 0 1px; }
.s-reg .sl-head { margin-bottom: 3px; }
.s-mkt .sl-head { height: 30px; }
.sl-scroll { display: flex; gap: 4px; overflow: hidden; }
.sl-scroll .sl-grid { flex: 1; align-content: start; }
.track { width: 20px; flex: none; background: #eee; padding: 0 7px; }
.thumb { display: block; width: 6px; background: #8a8a8a; }

.side { display: flex; flex-direction: column; margin: 1px 0 0 10px; align-items: flex-start; }
.s-cus { width: 282.500px; height: 102px; }
.s-mkt { width: 282px; height: 141px; margin: 5px 0 0 1.500px; }
.s-cty { width: 282px; height: 232px; margin: 7px 0 0 2.500px; }
.s-cty .sl-scroll { height: 190px; }
.s-cty .thumb { height: 12px; margin-top: 21px; }
.s-reg { width: 283px; height: 202px; margin: 8px 0 0 3px; }
.s-reg .sl-scroll { height: 160px; }
.s-reg .thumb { height: 84px; margin-top: 21px; }

/* Chart cards */
.lower { display: flex; padding-left: 32px; }
.charts { width: 1612px; flex: none; display: flex; flex-direction: column; gap: 34px; }
.chart-row { display: flex; align-items: flex-start; }
.r1 { gap: 31.500px; height: 332px; }
.r2 { gap: 25px; height: 333px; margin-left: -1px; }
.card { display: flex; flex-direction: column; flex: none; }
.card-title {
  position: relative; z-index: 1; height: 52.500px; flex: none; background: #5b9bd5; border: 1px solid #1f4e79;
  color: #fff; font-weight: 700; text-align: center; line-height: 50px; white-space: nowrap;
}
.panel { margin-top: -20.500px; padding-top: 28px; background: #5b9bd5; border: 1px solid #1f4e79; flex: none; }
.plot { display: block; overflow: hidden; }

.c-cat { width: 404px; } .c-cat .card-title { margin: 0 5px; font-size: 27.3px; }
.c-cat .panel { height: 300px; padding-left: 4px; } .c-cat .plot { width: 392px; height: 265px; }
.c-seg { width: 395px; } .c-seg .card-title { margin: 0 5px 0 4px; font-size: 24.7px; }
.c-seg .panel { height: 300px; padding-left: 5px; } .c-seg .plot { width: 384px; height: 264px; }
.c-map { width: 750px; } .c-map .card-title { margin: 0 8px; font-size: 27.4px; }
.c-map .panel { height: 300px; padding-left: 7px; } .c-map .plot { width: 731px; height: 264px; }
.c-top { width: 578px; } .c-top .card-title { margin: 0 6px; font-size: 24.6px; }
.c-top .panel { height: 301px; padding: 27px 0 0 6px; } .c-top .plot { width: 564px; height: 263px; }
.c-bot { width: 470.500px; } .c-bot .card-title { margin: 0 5px; font-size: 24.5px; }
.c-bot .panel { height: 301px; padding-left: 5px; } .c-bot .plot { width: 458px; height: 260px; }
.c-sca { width: 506.500px; margin: -1px 0 0 6.500px; } .c-sca .card-title { margin: 0 5px 0 6px; font-size: 27.5px; }
.c-sca .panel { height: 300.500px; padding-left: 6px; } .c-sca .plot { width: 494px; height: 262px; }

/* Chart contents */
.dl-black text { font-size: 12px; fill: #000; text-anchor: middle; }
.legend text { font-size: 12px; fill: #c8c8c8; }
.donut circle { fill: none; stroke-width: 22; }
.donut-shadow { fill: none; stroke: #000; stroke-width: 22; opacity: .55; }
.map polygon { stroke: #1c1c1c; stroke-width: 1.6; }
.ml { fill: #d8e6f6; } .mu { fill: #2e75b6; } .mm { fill: #a6c5e6; } .mc { fill: #a2c1e4; } .mb { fill: #c3d7ee; } .mx { fill: #2a2a2a; }
.map .mk { fill: #000; stroke: none; }
.mk-line { fill: none; stroke: #000; stroke-width: 4; }
.mline { fill: none; stroke: #1c1c1c; stroke-width: 1.600; }
.dl-map text { font-size: 13px; fill: #000; text-anchor: middle; }
.map-legend text { font-size: 12.5px; fill: #e6e6e6; }
.attr { font-size: 9px; fill: #d0d0d0; }
.attr-r { text-anchor: end; }
.grid3d { fill: none; stroke: #7c7c7c; stroke-width: 1.100; }
.axis-r text { font-size: 12.5px; fill: #dcdcdc; text-anchor: end; }
.axis-c text { font-size: 12.5px; fill: #dcdcdc; text-anchor: middle; }
.axis-l text { font-size: 12.5px; fill: #dcdcdc; }
.nums text { font-size: 11.6px; }
.cats text { font-size: 12.2px; }
.b-top { fill: #56789f; }
.b-side { fill: #345f90; }
.sc-bg { fill: #404040; stroke: #d9d9d9; }
.sc-grid { fill: none; stroke: #595959; }
.sc-axis { fill: none; stroke: #9a9a9a; }
.sc-axt text { font-size: 11.500px; fill: #bcbcbc; }
.sc-r { text-anchor: end; }
.sc-c text { text-anchor: middle; }
.sc-halo { fill: #1f80ee; stroke: #1f80ee; stroke-width: 18; stroke-linejoin: round; }
.sc-core { fill: #a3c8ea; }
.sc-tail-halo { stroke: #1f80ee; stroke-width: 44; stroke-linecap: round; fill: none; }
.sc-tail-core { stroke: #a3c8ea; stroke-width: 24; stroke-linecap: round; fill: none; }
.sc-mid { stroke: #86b4e0; stroke-width: 7; fill: none; }
.sc-pts circle { fill: #a8ccec; stroke: #3c8ce0; stroke-opacity: .45; stroke-width: 6; }
```
